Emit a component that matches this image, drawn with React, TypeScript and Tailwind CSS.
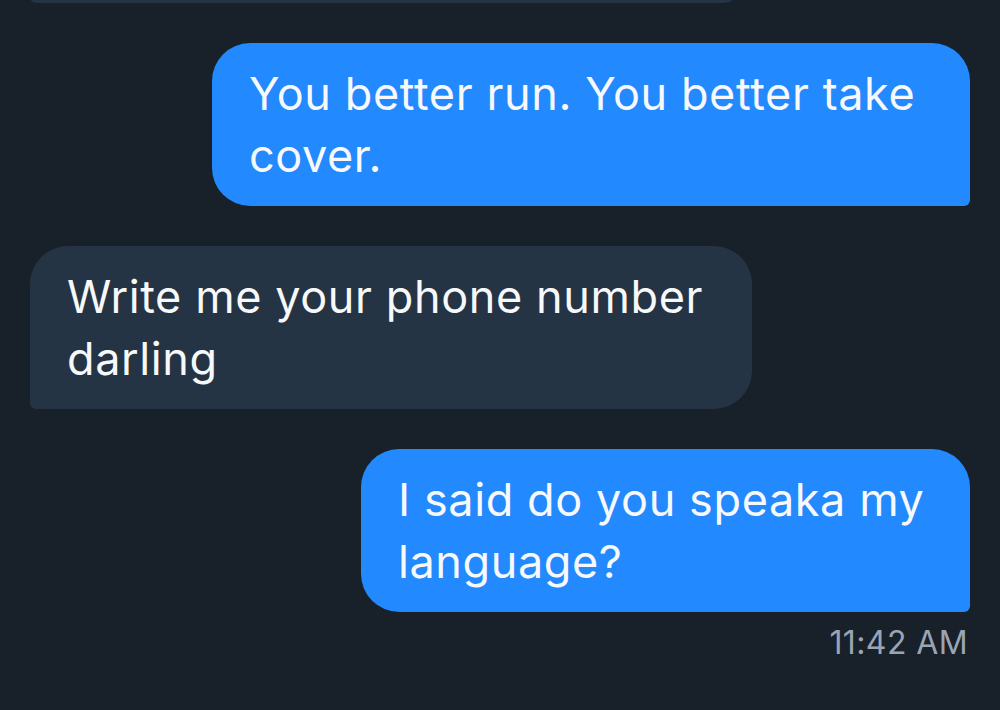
const messages = [
  { id: 1, mine: true, width: "w-[758px]", text: "You better run. You better take cover." },
  { id: 2, mine: false, width: "w-[722px]", text: "Write me your phone number darling" },
  { id: 3, mine: true, width: "w-[609px]", text: "I said do you speaka my language?" },
];

const Bubble: React.FC<{ mine: boolean; width: string; text: string }> = ({ mine, width, text }) => {
  return (
    <div
      className={`${width} pl-[37px] pr-[24px] pt-5 pb-[19px] text-[45px] leading-[62px] tracking-[0.6px] text-[#f6f8fa] ${
        mine
          ? "self-end bg-[#2289fe] rounded-[38px] rounded-br-[6px]"
          : "self-start bg-[#253444] rounded-[38px] rounded-bl-[6px]"
      }`}
    >
      {text}
    </div>
  );
};

export default function App() {
  return (
    <div className="w-[1000px] h-[710px] overflow-hidden bg-[#18202a] font-['Inter','Liberation_Sans',sans-serif]">
      <div className="flex flex-col gap-10 px-[30px]">
        {/* previous message, scrolled mostly out of view */}
        <div className="self-start w-[708px] h-[164px] -mt-[161px] bg-[#253444] rounded-[38px] rounded-bl-[6px] rounded-br-[14px]" />
        {messages.map((m) => (
          <Bubble key={m.id} mine={m.mine} width={m.width} text={m.text} />
        ))}
      </div>
      <div className="px-[32px] mt-[11px] text-right text-[32px] leading-[40px] tracking-[0.4px] text-[#9aa5b4]">
        11:42 AM
      </div>
    </div>
  );
}
